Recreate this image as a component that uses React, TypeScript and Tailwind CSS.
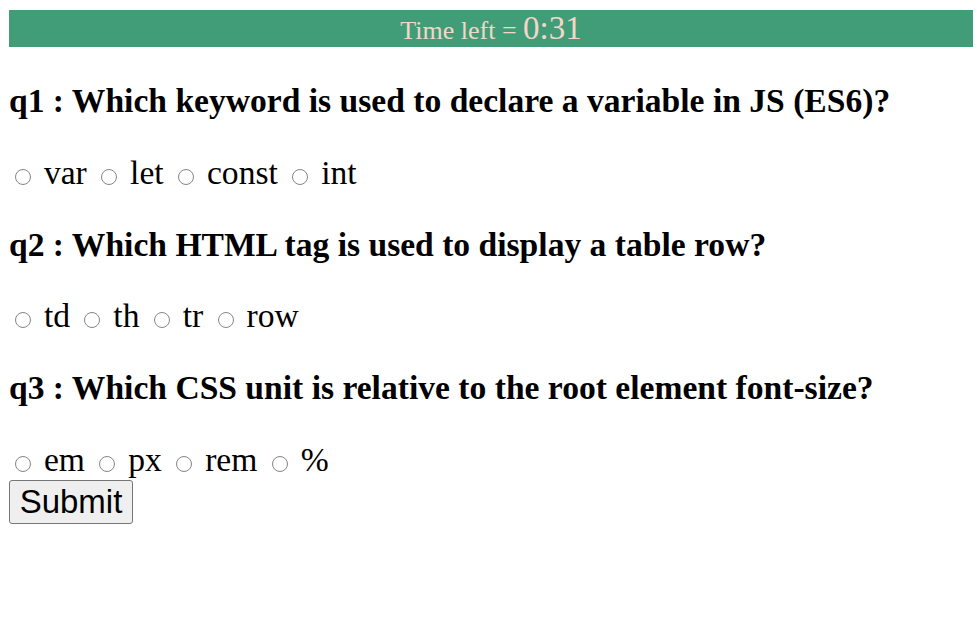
import React from "react";

const questions = [
  { q: "q1 : Which keyword is used to declare a variable in JS (ES6)?", opts: ["var", "let", "const", "int"] },
  { q: "q2 : Which HTML tag is used to display a table row?", opts: ["td", "th", "tr", "row"] },
  { q: "q3 : Which CSS unit is relative to the root element font-size?", opts: ["em", "px", "rem", "%"] },
];

function Radio() {
  return (
    <span className="inline-block w-[16px] h-[16px] rounded-full border-[1.5px] border-[#858585] bg-white ml-[6px] mr-[4.5px] align-[-1px]" />
  );
}

export default function App() {
  return (
    <div className="w-[977px] h-[642px] bg-white pl-[9px] pr-[4px] pt-[10px] font-['Liberation_Serif',serif] text-black">
      <div className="h-[37px] bg-[#419d78] text-center text-[#f3d7c8] leading-[37px] whitespace-nowrap">
        <span className="text-[26px]">Time left = </span>
        <span className="text-[33px]">0:31</span>
      </div>
      <div className="flex flex-col gap-[35.75px] mt-[36px]">
        {questions.map((item, i) => (
          <React.Fragment key={i}>
            <div className="text-[33.6px] font-bold leading-[36px] whitespace-nowrap">{item.q}</div>
            <div className="text-[33.6px] leading-[36px] whitespace-nowrap">
              {item.opts.map((o) => (
                <React.Fragment key={o}>
                  <Radio /> {o}{" "}
                </React.Fragment>
              ))}
            </div>
          </React.Fragment>
        ))}
      </div>
      <button className="mt-[2px] h-[44px] w-[124px] border border-[#767676] rounded-[3px] bg-[#efefef] font-['Liberation_Sans',sans-serif] text-[33px] leading-none text-black flex items-center justify-center">
        Submit
      </button>
    </div>
  );
}
